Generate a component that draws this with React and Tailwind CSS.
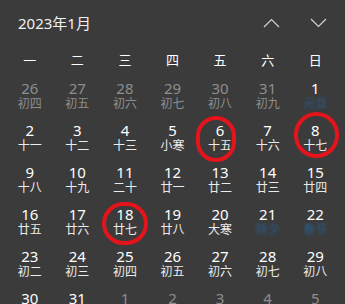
import React from 'react';

const weekdays = ['一', '二', '三', '四', '五', '六', '日'];

// day, lunar, muted (other month), festive (blue label)
const days = [
  [26, '初四', true], [27, '初五', true], [28, '初六', true], [29, '初七', true], [30, '初八', true], [31, '初九', true], [1, '元旦', false, true],
  [2, '十一'], [3, '十二'], [4, '十三'], [5, '小寒'], [6, '十五'], [7, '十六'], [8, '十七'],
  [9, '十八'], [10, '十九'], [11, '二十'], [12, '廿一'], [13, '廿二'], [14, '廿三'], [15, '廿四'],
  [16, '廿五'], [17, '廿六'], [18, '廿七'], [19, '廿八'], [20, '大寒'], [21, '除夕', false, true], [22, '春节', false, true],
  [23, '初二'], [24, '初三'], [25, '初四'], [26, '初五'], [27, '初六'], [28, '初七'], [29, '初八'],
  [30, '初九'], [31, '初十'], [1, '十一', true], [2, '十二', true], [3, '十三', true], [4, '十四', true], [5, '十五', true],
];

// hand-drawn red rings, keyed by cell index
const rings = {
  11: 'left-[0px] top-[2px] w-[40px] h-[46px]',
  13: 'left-[3px] top-[-2px] w-[45px] h-[46px]',
  23: 'left-[1px] top-[4px] w-[46px] h-[43px]',
};

const Chevron = ({ up }) => (
  <svg width="17" height="10" viewBox="0 0 17 10" fill="none" stroke="#d4d4d4" strokeWidth="1.2">
    {up ? <path d="M1 9 L8.5 1.5 L16 9" /> : <path d="M1 1 L8.5 8.5 L16 1" />}
  </svg>
);

const DayCell = ({ day, lunar, muted, festive, ring }) => (
  <div className="relative h-[42px] flex flex-col items-center pt-[7px]">
    <span className={`text-[15px] leading-[18px] ${muted ? 'text-[#8e8e8e]' : 'text-white'}`}>{day}</span>
    <span
      className={`text-[12px] leading-[14px] ${
        festive ? 'text-[#2b5c8a] blur-[1px]' : muted ? 'text-[#8e8e8e]' : 'text-[#ececec]'
      }`}
    >
      {lunar}
    </span>
    {ring && <div className={`absolute rounded-full border-4 border-[#e3141c] ${ring}`} />}
  </div>
);

const App = () => {
  return (
    <div
      className="w-[345px] h-[304px] overflow-hidden bg-[#3b3b3b] select-none"
      style={{ fontFamily: '"Segoe UI", "Noto Sans", "Noto Sans CJK SC", sans-serif' }}
    >
      <div className="h-[46px] flex items-center pl-[18px]">
        <span className="text-[15px] text-[#f0f0f0]">2023年1月</span>
        <div className="ml-auto flex items-center gap-[30px] pr-[18px]">
          <Chevron up />
          <Chevron />
        </div>
      </div>
      <div className="grid grid-cols-7 px-[6px] h-[26px] pt-[4px]">
        {weekdays.map((w) => (
          <div key={w} className="flex items-center justify-center text-[13px] text-white">
            {w}
          </div>
        ))}
      </div>
      <div className="grid grid-cols-7 px-[6px]">
        {days.map(([day, lunar, muted, festive], i) => (
          <DayCell key={i} day={day} lunar={lunar} muted={muted} festive={festive} ring={rings[i]} />
        ))}
      </div>
    </div>
  );
};

export default App;
